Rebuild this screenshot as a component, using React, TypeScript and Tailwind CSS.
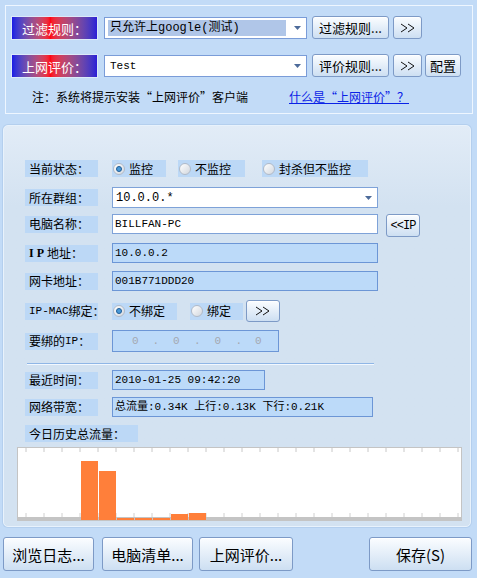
import React from 'react';

const cjk = "font-['Noto_Sans_CJK_SC','Noto_Sans',sans-serif]";
const mono = "font-['Liberation_Mono','Noto_Sans_CJK_SC',monospace]";

const Arrow = () => (
  <svg width="7" height="4" viewBox="0 0 7 4" className="shrink-0">
    <path d="M0 0 H7 L3.5 4 Z" fill="#4d6b9a" />
  </svg>
);

const Btn: React.FC<{ className?: string; children: React.ReactNode }> = ({ className = '', children }) => (
  <button
    className={`flex shrink-0 items-center justify-center rounded-[3px] border border-[#7d9ac6] bg-linear-to-b from-[#fbfdff] to-[#cddff2] text-black shadow-[inset_0_1px_0_#ffffff] ${className}`}
  >
    {children}
  </button>
);

const Chev = () => (
  <svg width="16" height="10" viewBox="0 0 16 10" className="block">
    <path d="M1 1 L7 5 L1 9 M8 1 L14 5 L8 9" fill="none" stroke="#111" strokeWidth="1" />
  </svg>
);

const Label: React.FC<{ w?: string; children: React.ReactNode }> = ({ w = 'w-[73px]', children }) => (
  <div className={`flex h-[17px] shrink-0 items-center whitespace-nowrap bg-[#bcd8f6] pl-[4px] text-[12px] leading-none ${w}`}>
    {children}
  </div>
);

const Radio: React.FC<{ on?: boolean; label: string; w: string; className?: string }> = ({ on, label, w, className = '' }) => (
  <div className={`flex h-[17px] shrink-0 items-center bg-[#bcd8f6] pl-[1px] ${w} ${className}`}>
    <span className="flex h-[12px] w-[12px] items-center justify-center rounded-full border border-[#b0bac8] bg-linear-to-br from-[#ffffff] to-[#d2d7de]">
      {on && <span className="h-[6px] w-[6px] rounded-full border border-[#1f5d98] bg-[#4a9ad8]" />}
    </span>
    <span className="ml-[4px] text-[12px] leading-none">{label}</span>
  </div>
);

const Field: React.FC<{ w: string; white?: boolean; h?: string; children?: React.ReactNode }> = ({ w, white, h = 'h-[20px]', children }) => (
  <div
    className={`flex shrink-0 items-center border pl-[2px] text-[11px] leading-none ${mono} ${w} ${h} ${
      white ? 'border-[#7ea2d8] bg-white' : 'border-[#6c96d6] bg-[#bcdaf9]'
    }`}
  >
    {children}
  </div>
);

const GradLabel: React.FC<{ children: React.ReactNode }> = ({ children }) => (
  <div className="flex h-[22px] w-[85px] shrink-0 items-center bg-linear-to-r from-[#1a18e6] via-[#ff0010] via-45% to-[#2c1cd6] pl-[10px] text-[13px] leading-none text-white outline outline-1 outline-[#dceaf8]">
    {children}
  </div>
);

const Chart = () => {
  const ticks = Array.from({ length: 25 }, (_, i) => 8 + i * 18);
  const bars = [
    { x: 63, h: 59 },
    { x: 81, h: 49 },
    { x: 99, h: 2 },
    { x: 117, h: 2 },
    { x: 135, h: 2 },
    { x: 153, h: 6 },
    { x: 171, h: 7 },
  ];
  return (
    <div className="ml-[13px] mt-[6px] h-[74px] w-[445px] border border-[#c4c4c4] bg-white">
      <svg width="443" height="72" viewBox="0 0 443 72" className="block">
        <rect x="0" y="69" width="443" height="3" fill="#c4c4c4" />
        {ticks.map((t) => (
          <g key={t}>
            <line x1={t} y1="0" x2={t} y2="4" stroke="#c8c8c8" strokeWidth="1" />
            <line x1={t} y1="65" x2={t} y2="69" stroke="#d0d0d0" strokeWidth="1" />
          </g>
        ))}
        {bars.map((b) => (
          <rect key={b.x} x={b.x} y={72 - b.h} width="17" height={b.h} fill="#ff7f3a" />
        ))}
      </svg>
    </div>
  );
};

export default function App() {
  return (
    <div className={`h-[578px] w-[477px] overflow-hidden bg-[#c2dbf7] text-black ${cjk}`}>
      {/* rule box */}
      <div className="ml-[5px] mt-[5px] h-[109px] w-[468px] border border-[#eef6ff]">
        <div className="ml-[6px] mt-[10px] flex h-[23px] items-end">
          <GradLabel>过滤规则：</GradLabel>
          <div className="ml-[7px] flex h-[22px] w-[203px] shrink-0 items-center border border-[#7a9cd8] bg-white pl-[3px] pr-[5px]">
            <div className={`flex h-[16px] w-[178px] items-center bg-[#b0c6e8] pl-[2px] text-[12px] leading-none ${mono}`}>
              只允许上google(测试)
            </div>
            <div className="ml-auto"><Arrow /></div>
          </div>
          <Btn className="ml-[5px] h-[23px] w-[77px] text-[13px] leading-none">过滤规则...</Btn>
          <Btn className="ml-[4px] h-[23px] w-[29px]"><Chev /></Btn>
        </div>
        <div className="ml-[6px] mt-[15px] flex h-[23px] items-end">
          <GradLabel>上网评价：</GradLabel>
          <div className="ml-[7px] flex h-[22px] w-[203px] shrink-0 items-center border border-[#7a9cd8] bg-white pl-[5px] pr-[5px]">
            <span className={`text-[11px] leading-none ${mono}`}>Test</span>
            <div className="ml-auto"><Arrow /></div>
          </div>
          <Btn className="ml-[5px] h-[23px] w-[77px] text-[13px] leading-none">评价规则...</Btn>
          <Btn className="ml-[4px] h-[23px] w-[29px]"><Chev /></Btn>
          <Btn className="ml-[3px] h-[23px] w-[36px] text-[13px] leading-none">配置</Btn>
        </div>
        <div className="ml-[26px] mt-[12px] flex h-[16px] items-center text-[12px] leading-none">
          <span className="w-[257px] whitespace-nowrap">注：系统将提示安装“上网评价”客户端</span>
          <span className="whitespace-nowrap text-[#0a22e6] underline">什么是“上网评价”？</span>
        </div>
      </div>

      {/* status panel */}
      <div className="ml-[3px] mt-[11px] h-[402px] w-[468px] rounded-[5px] border border-[#e8f2fc] bg-linear-to-b from-[#e2ecf7] to-[#d3e2f1] to-20% shadow-[0_0_0_1px_#b4cfee]">
        <div className="ml-[21px] mt-[34px] flex h-[17px] items-center">
          <Label>当前状态：</Label>
          <Radio on label="监控" w="w-[54px]" className="ml-[14px]" />
          <Radio label="不监控" w="w-[67px]" className="ml-[12px]" />
          <Radio label="封杀但不监控" w="w-[106px]" className="ml-[17px]" />
        </div>
        <div className="ml-[21px] mt-[10px] flex h-[21px] items-center">
          <Label>所在群组：</Label>
          <div className={`ml-[14px] flex h-[21px] w-[266px] items-center border border-[#7ea2d8] bg-white pl-[3px] pr-[5px] text-[12px] leading-none ${mono}`}>
            10.0.0.*
            <div className="ml-auto"><Arrow /></div>
          </div>
        </div>
        <div className="ml-[21px] mt-[6px] flex h-[23px] items-start">
          <div className="flex h-[20px] items-center"><Label>电脑名称：</Label></div>
          <div className="ml-[14px]">
            <Field w="w-[266px]" white>BILLFAN-PC</Field>
          </div>
          <Btn className={`ml-[8px] h-[23px] w-[34px] text-[12px] leading-none tracking-[-1px] ${mono}`}>&lt;&lt;IP</Btn>
        </div>
        <div className="ml-[21px] mt-[6px] flex h-[20px] items-center">
          <Label>
            <span className="font-['Liberation_Serif',serif] font-bold">I&nbsp;P&nbsp;</span>地址：
          </Label>
          <div className="ml-[14px]"><Field w="w-[266px]">10.0.0.2</Field></div>
        </div>
        <div className="ml-[21px] mt-[8px] flex h-[20px] items-center">
          <Label>网卡地址：</Label>
          <div className="ml-[14px]"><Field w="w-[266px]">001B771DDD20</Field></div>
        </div>
        <div className="ml-[21px] mt-[9px] flex h-[22px] items-center">
          <Label>
            <span className={`text-[11px] ${mono}`}>IP-MAC</span>绑定：
          </Label>
          <Radio on label="不绑定" w="w-[65px]" className="ml-[14px]" />
          <Radio label="绑定" w="w-[53px]" className="ml-[13px]" />
          <Btn className="ml-[3px] h-[22px] w-[34px]"><Chev /></Btn>
        </div>
        <div className="ml-[21px] mt-[8px] flex h-[22px] items-center">
          <Label>
            要绑的<span className={`text-[11px] ${mono}`}>IP</span>：
          </Label>
          <div className="ml-[14px]">
            <Field w="w-[167px]" h="h-[22px]">
              <div className="flex w-full text-[#a4a8b0]">
                <span className="w-[41px] text-center">0</span>
                <span className="w-[0px] -translate-x-[3px]">.</span>
                <span className="w-[42px] text-center">0</span>
                <span className="w-[0px] -translate-x-[3px]">.</span>
                <span className="w-[42px] text-center">0</span>
                <span className="w-[0px] -translate-x-[3px]">.</span>
                <span className="w-[40px] text-center">0</span>
              </div>
            </Field>
          </div>
        </div>
        <div className="ml-[23px] mt-[11px] h-[2px] w-[347px] border-t border-b border-t-[#8fb6e6] border-b-[#f2f8ff]" />
        <div className="ml-[21px] mt-[5px] flex h-[20px] items-center">
          <Label>最近时间：</Label>
          <div className="ml-[14px]"><Field w="w-[153px]">2010-01-25 09:42:20</Field></div>
        </div>
        <div className="ml-[21px] mt-[7px] flex h-[20px] items-center">
          <Label>网络带宽：</Label>
          <div className="ml-[14px]">
            <Field w="w-[261px]">总流量:0.34K 上行:0.13K 下行:0.21K</Field>
          </div>
        </div>
        <div className="ml-[21px] mt-[9px] flex h-[15px] items-center">
          <Label w="w-[113px]">今日历史总流量：</Label>
        </div>
        <Chart />
      </div>

      {/* bottom buttons */}
      <div className="mt-[10px] flex h-[34px] items-center">
        <Btn className="ml-[3px] h-[34px] w-[91px] text-[15px] leading-none">浏览日志...</Btn>
        <Btn className="ml-[8px] h-[34px] w-[91px] text-[15px] leading-none">电脑清单...</Btn>
        <Btn className="ml-[6px] h-[34px] w-[94px] text-[15px] leading-none">上网评价...</Btn>
        <Btn className="ml-[76px] h-[34px] w-[103px] text-[15px] leading-none">保存(S)</Btn>
      </div>
    </div>
  );
}
